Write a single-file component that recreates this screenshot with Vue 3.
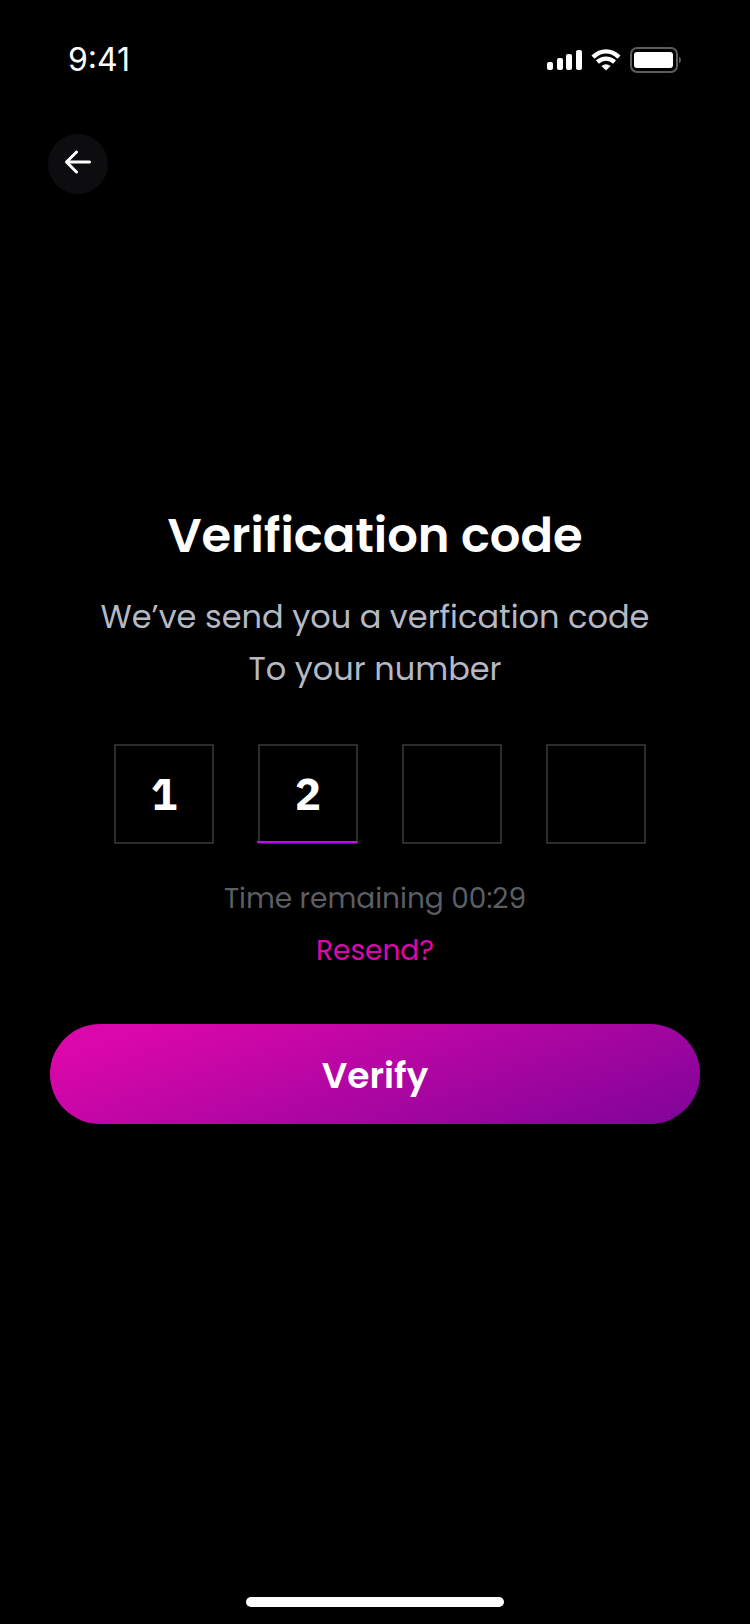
<script setup>
import { ref } from 'vue'

const digits = ref(['1', '2', '', ''])
const active = ref(1)
</script>

<template>
  <div class="screen">
    <header class="status">
      <span class="clock">9:41</span>
      <div class="indicators">
        <svg width="35" height="22" viewBox="0 0 35 22" fill="#fff" aria-hidden="true">
          <rect x="0" y="13" width="6" height="8" rx="2" />
          <rect x="10" y="9" width="6" height="12" rx="2" />
          <rect x="19" y="5" width="6" height="16" rx="2" />
          <rect x="29" y="1" width="6" height="20" rx="2" />
        </svg>
        <svg width="30" height="22" viewBox="0 0 30 22" aria-hidden="true">
          <g fill="none" stroke="#fff" stroke-width="4.4">
            <path d="M2 8.2Q8 2.4 15 2.4T28 8.2" />
            <path d="M6.4 13Q10.3 9.6 15 9.6T23.6 13" />
          </g>
          <path d="M10.4 17Q15 13.4 19.6 17L15 21.6Z" fill="#fff" />
        </svg>
        <svg width="52" height="26" viewBox="0 0 52 26" aria-hidden="true">
          <rect x="1" y="1" width="46" height="24" rx="6" fill="none" stroke="#5b5b60" stroke-width="2" />
          <rect x="4" y="5" width="39" height="16" rx="3" fill="#fff" />
          <path d="M49 9.5Q51 10.4 51 13T49 16.5Z" fill="#5b5b60" />
        </svg>
      </div>
    </header>

    <nav class="nav">
      <button class="back" type="button" aria-label="Back">
        <svg width="28" height="24" viewBox="0 0 28 24" fill="none" stroke="#fff" stroke-width="3" stroke-linecap="round" stroke-linejoin="round" aria-hidden="true">
          <path d="M12.5 2L2.5 12L12.5 22M3 12H25.5" />
        </svg>
      </button>
    </nav>

    <form class="verify" @submit.prevent>
      <h1>Verification code</h1>
      <p class="intro">We’ve send you a verfication code<br />To your number</p>

      <div class="code">
        <div v-for="(digit, i) in digits" :key="i" class="cell" :class="{ active: i === active }">
          <input
            v-model="digits[i]"
            type="text"
            inputmode="numeric"
            maxlength="1"
            :aria-label="`Digit ${i + 1}`"
            @focus="active = i"
          />
        </div>
      </div>

      <p class="timer">Time remaining 00:29</p>
      <a class="resend" href="#">Resend?</a>
      <button class="submit" type="submit">Verify</button>
    </form>

    <div class="home"></div>
  </div>
</template>

<style>
body {
  margin: 0;
  background: #000;
}
</style>

<style scoped>
.screen {
  display: flex;
  flex-direction: column;
  box-sizing: border-box;
  min-height: 100vh;
  background: #000;
  color: #fff;
  font-family: Poppins, Inter, "Liberation Sans", sans-serif;
}

.status {
  display: flex;
  justify-content: space-between;
  align-items: center;
  height: 40px;
  padding: 40px 68px 0;
}

.clock {
  font-family: Inter, "Liberation Sans", sans-serif;
  font-size: 32px;
  font-weight: 400;
  line-height: 40px;
}

.indicators {
  display: flex;
  align-items: center;
  gap: 9px;
}

.nav {
  padding: 54px 48px 0;
}

.back {
  display: flex;
  align-items: center;
  justify-content: center;
  width: 60px;
  height: 60px;
  padding: 0 0 4px;
  border: 0;
  border-radius: 50%;
  background: #0d0d0f;
}

.verify {
  display: flex;
  flex-direction: column;
  align-items: center;
  padding: 306px 50px 0;
}

h1 {
  margin: 0;
  font-size: 48px;
  font-weight: 600;
  line-height: 72px;
}

.intro {
  margin: 19px 0 0;
  color: #b4b9c4;
  font-size: 32px;
  line-height: 52px;
  text-align: center;
}

.code {
  display: flex;
  gap: 44px;
  margin-top: 49px;
  padding-left: 10px;
}

.cell {
  position: relative;
  width: 100px;
  height: 100px;
}

.cell input {
  box-sizing: border-box;
  width: 100%;
  height: 100%;
  padding: 0 0 2px;
  border: 2px solid #2c2c2c;
  border-radius: 0;
  outline: 0;
  background: transparent;
  color: #fff;
  font-family: "IBM Plex Sans", "Noto Sans CJK JP", sans-serif;
  font-size: 44px;
  font-weight: 700;
  text-align: center;
}

.cell.active::after {
  position: absolute;
  right: 1px;
  bottom: 1px;
  left: -1px;
  height: 2px;
  background: #cc00ff;
  content: "";
}

.timer,
.resend {
  margin: 0;
  font-size: 28px;
  line-height: 52px;
}

.timer {
  margin-top: 29px;
  color: #5c5e64;
}

.resend {
  color: #df06ad;
  text-decoration: none;
}

.submit {
  width: 100%;
  height: 100px;
  margin-top: 47px;
  padding: 2px 0 0;
  border: 0;
  border-radius: 50px;
  background: linear-gradient(161deg, #da07aa 12%, #7f0499 100%);
  color: #fff;
  font: inherit;
  font-size: 36px;
  font-weight: 600;
}

.home {
  align-self: center;
  width: 258px;
  height: 10px;
  margin: auto 0 17px;
  border-radius: 5px;
  background: #fff;
}
</style>
